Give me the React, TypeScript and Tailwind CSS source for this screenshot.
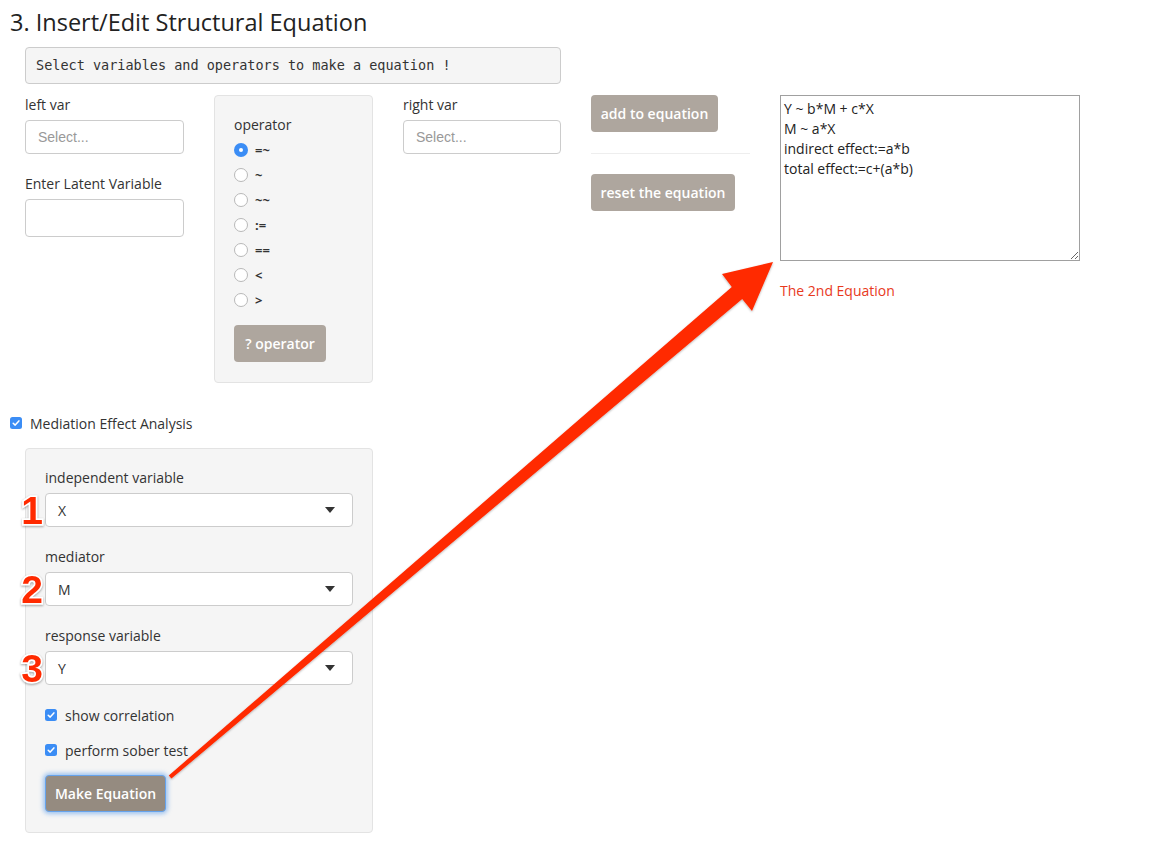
import React from "react";

const FONT = { fontFamily: '"Open Sans", "Noto Sans", sans-serif' };

function Radio({ checked, label }: { checked?: boolean; label: string }) {
  return (
    <div className="flex items-center h-[20px] mb-[5px]">
      {checked ? (
        <div className="w-[14px] h-[14px] rounded-full bg-[#3b8df5] flex items-center justify-center">
          <div className="w-[4px] h-[4px] rounded-full bg-white" />
        </div>
      ) : (
        <div className="w-[14px] h-[14px] rounded-full bg-white border border-[#b8b8b8]" />
      )}
      <span className="ml-[7px] text-[13px] font-bold text-[#333] leading-none">{label}</span>
    </div>
  );
}

function Check({ label }: { label: string }) {
  return (
    <div className="flex items-center h-[20px]">
      <svg width="12" height="12" viewBox="0 0 12 12" className="shrink-0">
        <rect x="0" y="0" width="12" height="12" rx="2.5" fill="#3b8df5" />
        <path d="M3.2 6.2 L5.2 8.1 L8.9 3.9" stroke="white" strokeWidth="1.5" fill="none" strokeLinecap="round" strokeLinejoin="round" />
      </svg>
      <span className="ml-[8px] text-[14px] text-[#333]">{label}</span>
    </div>
  );
}

function PlaceholderSelect() {
  return (
    <div className="h-[34px] w-full bg-white border border-[#ccc] rounded-[4px] flex items-center pl-[12px] text-[14px] text-[#999]" style={{ fontFamily: '"Liberation Sans", Arial, sans-serif' }}>
      Select...
    </div>
  );
}

function DropSelect({ value, num }: { value: string; num: string }) {
  return (
    <div className="relative">
      <span
        className="absolute right-full mr-[2px] top-1/2 -translate-y-1/2 text-[39px] font-bold text-[#ff2a00] leading-none [-webkit-text-stroke:3.5px_white] [paint-order:stroke_fill] [filter:drop-shadow(0_1px_1px_rgba(0,0,0,0.35))]"
        style={{ fontFamily: '"Liberation Sans", Arial, sans-serif' }}
      >
        {num}
      </span>
      <div className="h-[34px] w-[308px] bg-white border border-[#ccc] rounded-[4px] flex items-center justify-between pl-[12px] pr-[17px] text-[14px] text-[#333]">
        <span>{value}</span>
        <svg width="10" height="6" viewBox="0 0 10 6">
          <path d="M0 0 L10 0 L5 6 Z" fill="#333" />
        </svg>
      </div>
    </div>
  );
}

export default function App() {
  return (
    <div className="relative w-[1149px] h-[863px] bg-white overflow-hidden text-[#333]" style={FONT}>
      <h3 className="ml-[10px] mt-[8px] text-[23.5px] leading-[28px] font-normal text-[#222]">3. Insert/Edit Structural Equation</h3>

      <div className="ml-[25px] mt-[11px] w-[536px] h-[37px] bg-[#f5f5f5] border border-[#ccc] rounded-[4px] flex items-center pl-[10px] text-[13.5px] text-[#333]" style={{ fontFamily: '"DejaVu Sans Mono", "Liberation Mono", monospace' }}>
        Select variables and operators to make a equation !
      </div>

      <div className="flex ml-[25px] mt-[11px] gap-[30px]">
        {/* col 1 */}
        <div className="w-[159px]">
          <div className="text-[14px] leading-[20px] mb-[5px]">left var</div>
          <PlaceholderSelect />
          <div className="text-[14px] leading-[20px] mt-[20px] mb-[5px]">Enter Latent Variable</div>
          <div className="h-[38px] w-full bg-white border border-[#ccc] rounded-[4px]" />
        </div>

        {/* col 2 operator well */}
        <div className="w-[159px] h-[288px] bg-[#f5f5f5] border border-[#e3e3e3] rounded-[4px] pt-[19px] px-[19px]">
          <div className="text-[14px] leading-[20px] mb-[5px]">operator</div>
          <Radio checked label="=~" />
          <Radio label="~" />
          <Radio label="~~" />
          <Radio label=":=" />
          <Radio label="==" />
          <Radio label="<" />
          <Radio label=">" />
          <button className="mt-[10px] h-[37px] w-[92px] bg-[#aea69e] rounded-[4px] text-white text-[14px] font-semibold">? operator</button>
        </div>

        {/* col 3 */}
        <div className="w-[158px]">
          <div className="text-[14px] leading-[20px] mb-[5px]">right var</div>
          <PlaceholderSelect />
        </div>

        {/* col 4 */}
        <div className="w-[159px]">
          <button className="h-[37px] w-[127px] bg-[#aea69e] rounded-[4px] text-white text-[14px] font-semibold">add to equation</button>
          <div className="mt-[21px] mb-[20px] border-t border-[#eee]" />
          <button className="h-[37px] w-[144px] bg-[#aea69e] rounded-[4px] text-white text-[14px] font-semibold">reset the equation</button>
        </div>

        {/* col 5 */}
        <div className="w-[300px]">
          <textarea
            readOnly
            className="block w-[300px] h-[166px] border border-[#a0a0a0] px-[3px] py-[3px] text-[14px] leading-[20px] text-[#222] outline-none resize"
            style={FONT}
            defaultValue={"Y ~ b*M + c*X\nM ~ a*X\nindirect effect:=a*b\ntotal effect:=c+(a*b)"}
          />
          <div className="mt-[20px] text-[14px] leading-[20px] text-[#e8391d]">The 2nd Equation</div>
        </div>
      </div>

      <div className="ml-[10px] mt-[30px]">
        <Check label="Mediation Effect Analysis" />
      </div>

      <div className="ml-[25px] mt-[15px] w-[348px] h-[385px] bg-[#f5f5f5] border border-[#e3e3e3] rounded-[4px] pt-[19px] px-[19px]">
        <div className="text-[14px] leading-[20px] mb-[5px]">independent variable</div>
        <DropSelect value="X" num="1" />
        <div className="text-[14px] leading-[20px] mt-[20px] mb-[5px]">mediator</div>
        <DropSelect value="M" num="2" />
        <div className="text-[14px] leading-[20px] mt-[20px] mb-[5px]">response variable</div>
        <DropSelect value="Y" num="3" />
        <div className="mt-[20px]">
          <Check label="show correlation" />
        </div>
        <div className="mt-[15px]">
          <Check label="perform sober test" />
        </div>
        <button className="mt-[15px] h-[37px] w-[121px] bg-[#958b80] rounded-[4px] text-white text-[14px] font-semibold border border-[#66a3ec] shadow-[0_0_4px_2px_rgba(102,163,236,0.6)]">Make Equation</button>
      </div>

      <svg className="absolute left-0 top-0 pointer-events-none" width="1149" height="863" viewBox="0 0 1149 863">
        <defs>
          <filter id="sh" x="-10%" y="-10%" width="120%" height="120%">
            <feDropShadow dx="0" dy="1" stdDeviation="1.2" floodColor="#000" floodOpacity="0.3" />
          </filter>
        </defs>
        <polygon
          filter="url(#sh)"
          fill="#ff2a00"
          points="168.8,775.5 171.4,778.6 742.2,299.1 752,311 773,262 722,274 731.8,286.9"
        />
      </svg>
    </div>
  );
}
